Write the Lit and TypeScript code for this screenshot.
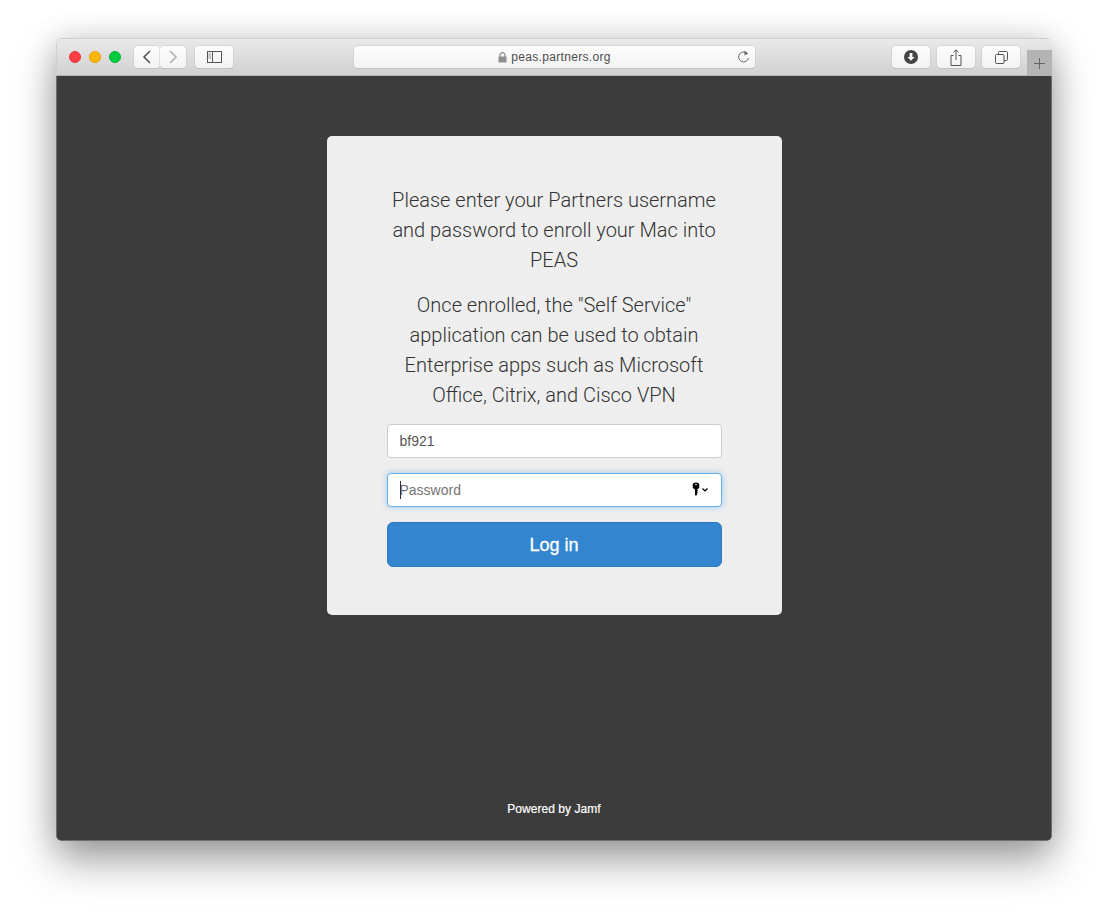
import { LitElement, html, css } from 'lit';
import { customElement } from 'lit/decorators.js';

@customElement('app-root')
export class AppRoot extends LitElement {
  static styles = css`
    :host {
      display: block;
      height: 915px;
      box-sizing: border-box;
      padding: 38px 56px 74px;
      background: #fff;
      font-family: 'Liberation Sans', Arial, sans-serif;
      overflow: hidden;
    }

    .window {
      height: 803px;
      display: flex;
      flex-direction: column;
      border-radius: 5px;
      overflow: hidden;
    }

    .shadow {
      border-radius: 5px;
      box-shadow: 0 20px 42px rgba(0, 0, 0, 0.36), 0 0 30px rgba(0, 0, 0, 0.14);
    }

    .toolbar {
      height: 38px;
      box-sizing: border-box;
      display: flex;
      align-items: flex-start;
      padding: 7px 0 0 13px;
      background: linear-gradient(#e9e9e9, #d1d1d1);
      border: 1px solid #d0d0d0;
      border-right: none;
      border-bottom: 1px solid #b4b4b4;
      border-radius: 5px 5px 0 0;
    }

    .lights {
      display: flex;
      gap: 8px;
      padding-top: 5px;
      margin-left: -1px;
    }

    .light {
      width: 12px;
      height: 12px;
      border-radius: 50%;
      box-sizing: border-box;
    }

    .red { background: #fc3d44; border: 1px solid #e6353c; }
    .yellow { background: #fdb700; border: 1px solid #e5a500; }
    .green { background: #00ca3e; border: 1px solid #00b436; }

    .btn {
      height: 22px;
      box-sizing: border-box;
      display: flex;
      align-items: center;
      justify-content: center;
      background: linear-gradient(#fcfcfc, #f3f3f3);
      border-radius: 4px;
      box-shadow: 0 0 0 0.5px #c8c8c8, 0 1px 0 #b8b8b8;
    }

    .nav { width: 26px; }
    .back { margin-left: 13px; }
    .wide { width: 38px; }
    .sidebar { margin-left: 9px; }

    .url {
      width: 401px;
      margin-left: 121px;
      position: relative;
      font-size: 12px;
      color: #4d4d4d;
      gap: 4px;
      letter-spacing: 0.32px;
    }

    .reload {
      position: absolute;
      right: 5px;
      top: 4px;
    }

    .download { margin-left: 137px; }
    .share, .tabs { margin-left: 7px; }

    .new-tab {
      width: 25px;
      height: 26px;
      margin: 4px 0 0 7px;
      background: #b4b4b4;
      display: flex;
      align-items: center;
      justify-content: center;
    }

    .page {
      flex: 1;
      display: flex;
      flex-direction: column;
      align-items: center;
      background: #3c3c3c;
      padding-top: 60px;
      padding-bottom: 24px;
      box-sizing: border-box;
      border: 1px solid #6f6f6f;
      border-top: none;
      border-radius: 0 0 5px 5px;
    }

    .card {
      width: 455px;
      height: 479px;
      box-sizing: border-box;
      padding: 49px 60px 48px;
      background: #eeeeee;
      border-radius: 5px;
    }

    .card p {
      margin: 0 0 15px;
      font-family: Roboto, 'Liberation Sans', sans-serif;
      font-size: 20px;
      font-weight: 300;
      line-height: 30px;
      text-align: center;
      color: #333;
    }

    .card p.last {
      margin-bottom: 14px;
    }

    .field {
      position: relative;
      margin-bottom: 15px;
      height: 34px;
    }

    .field input {
      display: block;
      width: 100%;
      height: 100%;
      box-sizing: border-box;
      padding: 0 12px;
      font: 14px 'Liberation Sans', Arial, sans-serif;
      color: #555;
      background: #fff;
      border: 1px solid #ccc;
      border-radius: 4px;
      outline: none;
    }

    .field input::placeholder { color: #757575; opacity: 1; }

    .field.focus input {
      border-color: #66afe9;
      box-shadow: 0 0 6px rgba(102, 175, 233, 0.6);
    }

    .caret {
      position: absolute;
      left: 13px;
      top: 8px;
      width: 1px;
      height: 18px;
      background: #333;
    }

    .key {
      position: absolute;
      right: 13px;
      top: 9px;
    }

    .login {
      display: block;
      width: 100%;
      height: 45px;
      padding: 1px 0 0;
      font: 18px 'Liberation Sans', Arial, sans-serif;
      -webkit-text-stroke: 0.3px #fff;
      color: #fff;
      background: #3385cf;
      border: 1px solid #2e78bb;
      border-radius: 6px;
    }

    .footer {
      margin-top: auto;
      font-size: 12px;
      letter-spacing: 0.05px;
      -webkit-text-stroke: 0.2px #fff;
      color: #fff;
    }
  `;

  render() {
    return html`
      <div class="shadow">
        <div class="window">
          <div class="toolbar">
            <div class="lights">
              <div class="light red"></div>
              <div class="light yellow"></div>
              <div class="light green"></div>
            </div>
            <div class="btn nav back">
              <svg width="10" height="14" viewBox="0 0 10 14" fill="none" stroke="#555" stroke-width="1.6"><path d="M8 1 2 7l6 6" /></svg>
            </div>
            <div class="btn nav">
              <svg width="10" height="14" viewBox="0 0 10 14" fill="none" stroke="#b0b0b0" stroke-width="1.6"><path d="M2 1l6 6-6 6" /></svg>
            </div>
            <div class="btn wide sidebar">
              <svg width="15" height="12" viewBox="0 0 15 12" fill="none" stroke="#555"><rect x="0.5" y="0.5" width="14" height="11" /><path d="M5.5 0.5v11" /><path d="M1.5 3h2.5M1.5 5h2.5M1.5 7h2.5" stroke="#888" /></svg>
            </div>
            <div class="btn url">
              <svg width="9" height="11" viewBox="0 0 9 11"><path d="M2 5V3.2a2.5 2.5 0 0 1 5 0V5" fill="none" stroke="#8e8e8e" stroke-width="1.2" /><rect x="0.5" y="4.6" width="8" height="6" rx="0.8" fill="#8e8e8e" /></svg>
              <span>peas.partners.org</span>
              <svg class="reload" width="13" height="14" viewBox="0 0 13 14" fill="none" stroke="#666"><path d="M10.8 4.2A5 5 0 1 0 11.5 8" /><path d="M7.5 0.5 11 3.5 7.5 5.5z" fill="#666" stroke="none" /></svg>
            </div>
            <div class="btn wide download">
              <svg width="14" height="14" viewBox="0 0 14 14"><circle cx="7" cy="7" r="7" fill="#444" /><path d="M5.6 3h2.8v4h2.2L7 10.8 3.4 7h2.2z" fill="#f8f8f8" /></svg>
            </div>
            <div class="btn wide share">
              <svg width="12" height="17" viewBox="0 0 12 17" fill="none" stroke="#555"><path d="M3.5 6.5H1v10h10v-10H8.5" /><path d="M6 11V1M3.5 3.2 6 .8l2.5 2.4" /></svg>
            </div>
            <div class="btn wide tabs">
              <svg width="13" height="13" viewBox="0 0 13 13" fill="none" stroke="#555"><rect x="0.5" y="3.5" width="8.5" height="9" rx="1" /><path d="M3.5 3.5V1.5a1 1 0 0 1 1-1h7a1 1 0 0 1 1 1v7a1 1 0 0 1-1 1H9" /></svg>
            </div>
            <div class="new-tab">
              <svg width="11" height="11" viewBox="0 0 11 11" stroke="#666"><path d="M5.5 0v11M0 5.5h11" /></svg>
            </div>
          </div>
          <div class="page">
            <div class="card">
              <p>Please enter your Partners username and password to enroll your Mac into PEAS</p>
              <p class="last">Once enrolled, the "Self Service" application can be used to obtain Enterprise apps such as Microsoft Office, Citrix, and Cisco VPN</p>
              <div class="field"><input type="text" value="bf921" /></div>
              <div class="field focus">
                <input type="password" placeholder="Password" />
                <span class="caret"></span>
                <svg class="key" width="17" height="15" viewBox="0 0 17 15">
                  <circle cx="4" cy="4" r="3.4" fill="#000" />
                  <circle cx="4" cy="2.6" r="0.8" fill="#fff" />
                  <path d="M3 6h2v1.5l1 1-1 1 .8 1-.8 1v1L4 14l-1-1.2z" fill="#000" />
                  <path d="M10.5 6.5 13 9l2.5-2.5" fill="none" stroke="#000" stroke-width="1.2" />
                </svg>
              </div>
              <button class="login">Log in</button>
            </div>
            <div class="footer">Powered by Jamf</div>
          </div>
        </div>
      </div>
    `;
  }
}
